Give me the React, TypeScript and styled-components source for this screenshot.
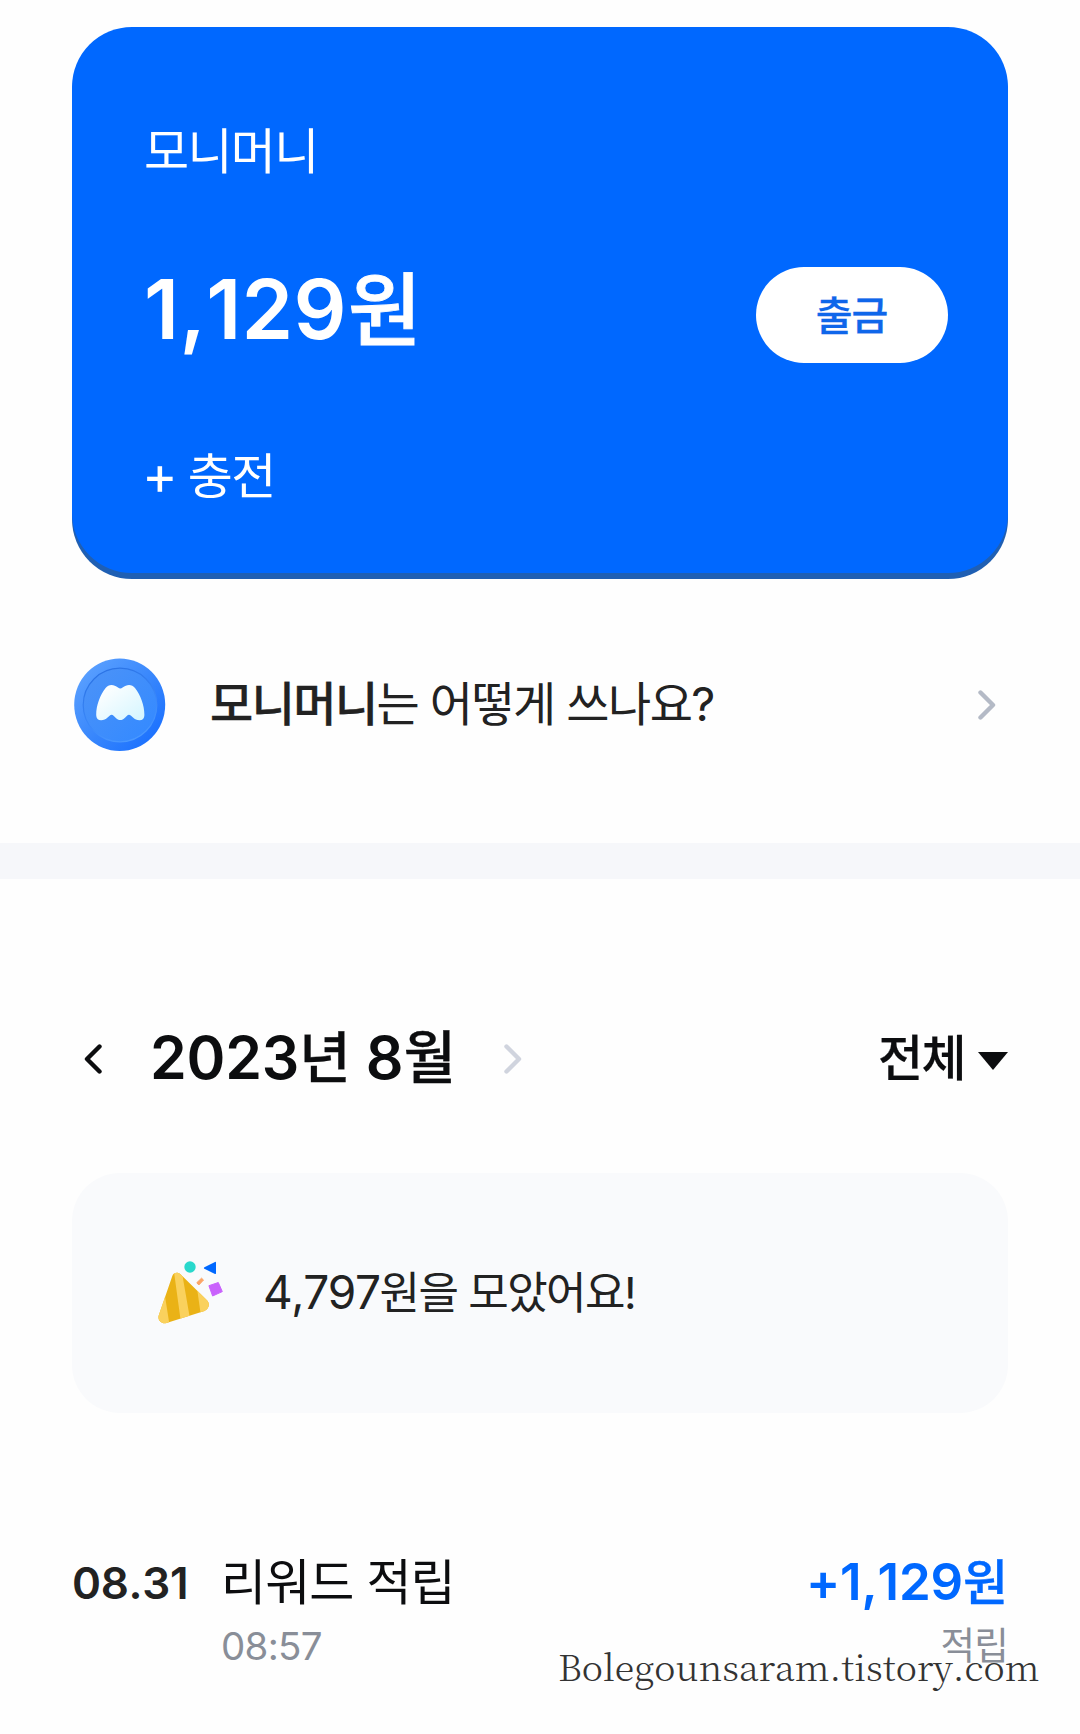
import React from 'react';
import styled, { createGlobalStyle } from 'styled-components';

const GlobalStyle = createGlobalStyle`
  * { box-sizing: border-box; }
  body {
    margin: 0;
    background: #fefefe;
    font-family: Inter, 'Noto Sans CJK KR', sans-serif;
    font-kerning: none;
    color: #222;
  }
  button { font: inherit; font-kerning: none; border: 0; padding: 0; background: none; color: inherit; }
`;

const Page = styled.main`
  position: relative;
  width: 1080px;
  height: 1734px;
  overflow: hidden;
  padding-top: 27px;
`;

/* Digits and Hangul are set at slightly different sizes, tracking and stroke. */
const Run = styled.span<{
  $size: number;
  $track?: number;
  $weight?: number;
  $gap?: number;
  $stroke?: number;
  $lift?: number;
}>`
  font-size: ${(p) => p.$size}px;
  letter-spacing: ${(p) => p.$track ?? 0}px;
  font-weight: ${(p) => p.$weight ?? 'inherit'};
  margin-left: ${(p) => p.$gap ?? 0}px;
  vertical-align: ${(p) => p.$lift ?? 0}px;
  -webkit-text-stroke: ${(p) => p.$stroke ?? 0}px currentColor;
  line-height: 1;
`;

const BalanceCard = styled.section`
  height: 546px;
  margin: 0 72px;
  padding: 93px 60px 0 72px;
  border-radius: 60px;
  background: #0068ff;
  box-shadow: 0 6px 0 #1f5fb3;
  color: #fff;
  display: flex;
  flex-direction: column;
`;

const CardTitle = styled.h2`
  margin: 0;
  height: 64px;
  line-height: 64px;
  font-size: 49px;
  font-weight: 400;
  letter-spacing: -1.7px;
`;

const BalanceRow = styled.div`
  display: flex;
  align-items: center;
  justify-content: space-between;
  height: 96px;
  margin-top: 83px;
`;

const Balance = styled.strong`
  font-weight: 600;
  font-size: 83px;
  line-height: 96px;
  padding-bottom: 13px;
  white-space: nowrap;
`;

const WithdrawButton = styled.button`
  width: 192px;
  height: 96px;
  padding: 2px 1px 0 0;
  border-radius: 48px;
  background: #fff;
  color: #0f66ea;
  font-size: 40px;
  font-weight: 500;
  letter-spacing: -1px;
  line-height: 94px;
  -webkit-text-stroke: 0.3px currentColor;
`;

const ChargeButton = styled.button`
  margin-top: 82px;
  height: 64px;
  line-height: 64px;
  text-align: left;
  font-size: 49px;
  white-space: nowrap;
`;

const GuideRow = styled.a`
  display: flex;
  align-items: center;
  height: 96px;
  margin: 84px 84px 0 74px;
`;

const GuideText = styled.span`
  flex: 1;
  margin-left: 44px;
  padding-bottom: 2px;
  font-size: 47px;
  line-height: 64px;
  white-space: nowrap;
`;

const Divider = styled.hr`
  margin: 90px 0 0;
  height: 36px;
  border: 0;
  background: #f6f7fa;
`;

const MonthBar = styled.div`
  display: flex;
  align-items: center;
  height: 80px;
  margin: 140px 72px 0 84px;
`;

const MonthTitle = styled.h1`
  margin: 0 0 0 48px;
  width: 305px;
  padding-bottom: 2px;
  font-size: 59px;
  font-weight: 600;
  line-height: 78px;
  color: #0c0d0f;
  white-space: nowrap;
`;

const NextMonth = styled.button`
  display: flex;
  margin-left: 49px;
`;

const PrevMonth = styled.button`
  display: flex;
`;

const Filter = styled.button`
  display: flex;
  align-items: center;
  gap: 13px;
  margin-left: auto;
  font-size: 49px;
  font-weight: 500;
  line-height: 80px;
  letter-spacing: -1.6px;
  color: #0c0d0f;
  -webkit-text-stroke: 0.2px currentColor;

  svg { margin-top: 4px; }
`;

const Summary = styled.section`
  display: flex;
  align-items: center;
  height: 240px;
  margin: 74px 72px 0;
  padding-left: 86px;
  border-radius: 48px;
  background: #f9fafc;
`;

const SummaryText = styled.p`
  margin: 0 0 0 38px;
  padding-bottom: 2px;
  font-size: 46px;
  line-height: 64px;
  white-space: nowrap;
`;

const Entry = styled.article`
  display: flex;
  margin: 134px 72px 0;
`;

const EntryDate = styled.time`
  width: 149px;
  padding-top: 1px;
  font-size: 44px;
  font-weight: 600;
  line-height: 70px;
  letter-spacing: -0.3px;
`;

const EntryColumn = styled.div<{ $end?: boolean }>`
  display: flex;
  flex-direction: column;
  align-items: ${(p) => (p.$end ? 'flex-end' : 'flex-start')};
  margin-left: ${(p) => (p.$end ? 'auto' : '0')};
`;

const EntryTitle = styled.span`
  padding-top: 1px;
  font-size: 49px;
  line-height: 69px;
  letter-spacing: -0.9px;
  color: #0c0d0f;
  white-space: nowrap;
`;

const EntryAmount = styled.strong`
  font-size: 51px;
  font-weight: 600;
  line-height: 70px;
  color: #0068ff;
  white-space: nowrap;
`;

const EntryNote = styled.span<{ $size: number }>`
  padding-top: 1px;
  font-size: ${(p) => p.$size}px;
  line-height: 56px;
  color: #898e98;
  letter-spacing: -0.7px;
`;

const Watermark = styled.span`
  position: absolute;
  left: 558px;
  top: 1642px;
  font-family: 'Noto Serif CJK KR', 'Source Serif 4', 'Liberation Serif', serif;
  font-size: 35.9px;
  font-weight: 300;
  line-height: 48px;
  color: #333;
  white-space: nowrap;
`;

const Chevron = ({ color, flip }: { color: string; flip?: boolean }) => (
  <svg width="18" height="30" viewBox="0 0 18 30" fill="none">
    <path
      d={flip ? 'M15.5 2.5 3 15l12.5 12.5' : 'M2.5 2.5 15 15 2.5 27.5'}
      stroke={color}
      strokeWidth="4.4"
      strokeLinecap="round"
      strokeLinejoin="round"
    />
  </svg>
);

const CoinIcon = () => (
  <svg width="92" height="94" viewBox="0 0 92 94">
    <defs>
      <linearGradient id="rim" x1="0.1" y1="0.1" x2="0.9" y2="0.9">
        <stop offset="0" stopColor="#5aa0ff" />
        <stop offset="0.5" stopColor="#3a88fc" />
        <stop offset="1" stopColor="#1a70ff" />
      </linearGradient>
      <linearGradient id="face" x1="0.1" y1="0.1" x2="0.9" y2="0.9">
        <stop offset="0" stopColor="#4a92f8" />
        <stop offset="1" stopColor="#358aff" />
      </linearGradient>
      <linearGradient id="edge" x1="0.3" y1="0" x2="0.7" y2="1">
        <stop offset="0" stopColor="#2a72e4" />
        <stop offset="0.6" stopColor="#3a88fa" />
        <stop offset="1" stopColor="#4b9aff" />
      </linearGradient>
      <linearGradient id="mark" x1="0.1" y1="0.1" x2="0.9" y2="0.9">
        <stop offset="0" stopColor="#ffffff" />
        <stop offset="1" stopColor="#d8f6ff" />
      </linearGradient>
    </defs>
    <ellipse cx="45.7" cy="46.8" rx="45.5" ry="46.3" fill="url(#rim)" />
    <circle cx="46" cy="47" r="36.8" fill="url(#face)" stroke="url(#edge)" strokeWidth="1.2" />
    <path
      d="M44 29.600C45.500 30.900 47.100 30.900 48.600 29.600C53 26 58 26.200 61 30C66.500 37 70.400 47 70.400 57C70.400 60.500 68.500 62.200 65.500 62.200C62.800 62.200 61 61.300 59 59.500L57 57.700C55.600 56.500 54.300 56.500 53 57.700L51 59.700C48 62.800 44.600 62.800 41.600 59.700L39.600 57.700C38.300 56.500 37 56.500 35.600 57.700L33.600 59.500C31.600 61.300 29.800 62.200 27.100 62.200C24.100 62.200 22.200 60.500 22.200 57C22.200 47 26.100 37 31.600 30C34.600 26.200 39.600 26 44 29.600Z"
      fill="url(#mark)"
    />
  </svg>
);

const PartyIcon = () => (
  <svg width="67" height="66" viewBox="0 0 67 66">
    <defs>
      <clipPath id="cone">
        <path d="M14.300 16C15.600 12.200 20 11.600 23 14.700L49.200 40.500C52.200 44 51 49.200 46.500 50.900L8.500 63C4 64.500-.700 60.500 .700 55.500Z" />
      </clipPath>
    </defs>
    <g clipPath="url(#cone)">
      <path d="M0 0H67V66H0Z" fill="#eab216" />
      <path d="M-3 20H4.300L7.300 38 11.700 66H-3Z" fill="#fad15d" />
      <path d="M15.600 9H23.400L24.700 16.700 32.200 60H22.600Z" fill="#fad15d" />
      <path d="M37.900 20H58V60H43.500Z" fill="#fad15d" />
    </g>
    <circle cx="32" cy="7" r="5.700" fill="#29d8cc" />
    <path d="M46.400 7.200 57 1.900Q58 1.500 58 2.600V13.300Q58 14.400 57 14L46.400 8.800Q45.400 8 46.400 7.200Z" fill="#0068ff" />
    <path d="M38.800 22.700 43.500 18.200 45.500 20 40.800 25Z" fill="#fca566" stroke="#fca566" strokeLinejoin="round" />
    <path d="M50.900 25.700 60.300 22.500 64.300 31.600 54.600 36Z" fill="#c962fc" stroke="#c962fc" strokeLinejoin="round" />
  </svg>
);

export default function App() {
  return (
    <Page>
      <GlobalStyle />
      <BalanceCard>
        <CardTitle>모니머니</CardTitle>
        <BalanceRow>
          <Balance>
            <Run $size={83} $track={0.3}>1,129</Run>
            <Run $size={80} $weight={500} $stroke={0.8} $lift={0} $gap={1}>원</Run>
          </Balance>
          <WithdrawButton>출금</WithdrawButton>
        </BalanceRow>
        <ChargeButton>
          <Run $size={54} $gap={-2}>+</Run>
          <Run $size={49} $track={-1.6} $gap={10}>충전</Run>
        </ChargeButton>
      </BalanceCard>

      <GuideRow>
        <CoinIcon />
        <GuideText>
          <Run $size={47} $track={-1.6} $weight={500} $stroke={0.3}>모니머니</Run>
          <Run $size={47} $track={-1.6}>는 어떻게 쓰나요?</Run>
        </GuideText>
        <Chevron color="#b4bac6" />
      </GuideRow>

      <Divider />

      <MonthBar>
        <PrevMonth aria-label="이전 달">
          <Chevron color="#0c0d0f" flip />
        </PrevMonth>
        <MonthTitle>
          <Run $size={59} $track={-0.2}>2023</Run>
          <Run $size={56} $weight={500} $stroke={0.3} $lift={1}>년 </Run>
          <Run $size={59}>8</Run>
          <Run $size={57} $weight={500} $stroke={0.3} $lift={1}>월</Run>
        </MonthTitle>
        <NextMonth aria-label="다음 달">
          <Chevron color="#d0d4de" />
        </NextMonth>
        <Filter>
          전체
          <svg width="30" height="18" viewBox="0 0 30 18">
            <path d="M0 0H30L15 18Z" fill="#0c0d0f" />
          </svg>
        </Filter>
      </MonthBar>

      <Summary>
        <PartyIcon />
        <SummaryText>
          <Run $size={46} $track={-1.4}>4,797</Run>
          <Run $size={44} $track={-1.55}>원을 모았어요!</Run>
        </SummaryText>
      </Summary>

      <Entry>
        <EntryDate>08.31</EntryDate>
        <EntryColumn>
          <EntryTitle>리워드 적립</EntryTitle>
          <EntryNote $size={38.5}>08:57</EntryNote>
        </EntryColumn>
        <EntryColumn $end>
          <EntryAmount>
            <Run $size={51} $track={-0.2}>+1,129</Run>
            <Run $size={49} $weight={500} $stroke={0.3}>원</Run>
          </EntryAmount>
          <EntryNote $size={37.5}>적립</EntryNote>
        </EntryColumn>
      </Entry>

      <Watermark>Bolegounsaram.tistory.com</Watermark>
    </Page>
  );
}
